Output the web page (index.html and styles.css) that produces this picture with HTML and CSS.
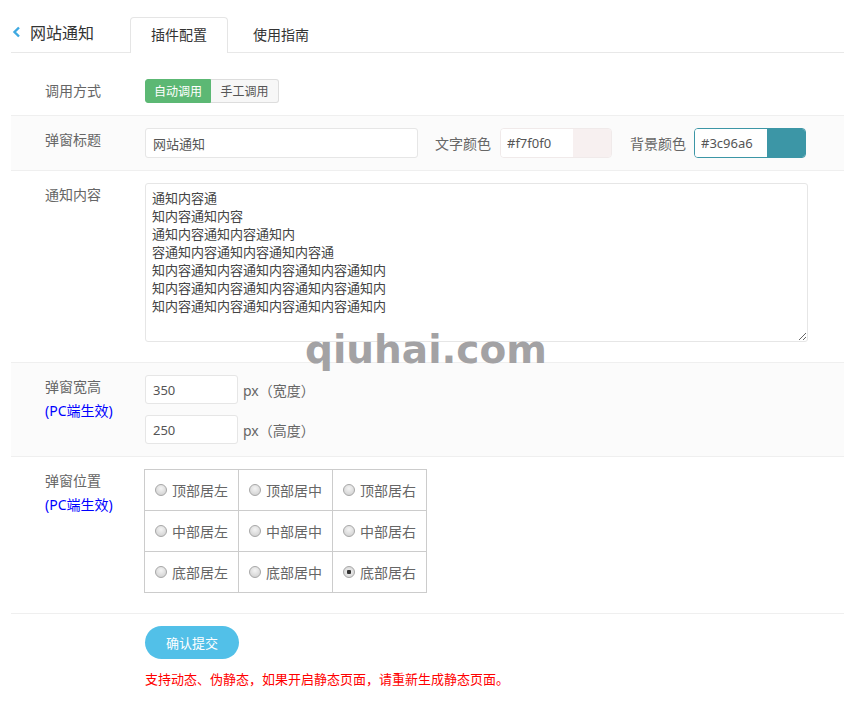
FILE: index.html
```html
<!DOCTYPE html>
<html lang="zh-CN">
<head>
    <meta charset="UTF-8">
    <meta name="viewport" content="width=device-width, initial-scale=1.0">
    <title>网站通知 - 插件配置</title>
    <link rel="stylesheet" href="styles.css">
</head>
<body>
    <div class="wrap">
        <div class="topbar">
            <a href="#" class="back">
                <svg width="9" height="12" viewBox="0 0 9 12"><path d="M7 1.5 L2.5 6 L7 10.5" fill="none" stroke="#3ea9e1" stroke-width="2.4"/></svg>
                网站通知
            </a>
            <ul class="tabs">
                <li class="tab active">插件配置</li>
                <li class="tab">使用指南</li>
            </ul>
        </div>

        <form class="form">
            <!-- 调用方式 -->
            <div class="row row-first">
                <div class="row-label">调用方式</div>
                <div class="row-body">
                    <div class="btn-group">
                        <button type="button" class="btn-mode on">自动调用</button>
                        <button type="button" class="btn-mode">手工调用</button>
                    </div>
                </div>
            </div>

            <!-- 弹窗标题 -->
            <div class="row row-gray">
                <div class="row-label">弹窗标题</div>
                <div class="row-body inline">
                    <input type="text" class="input input-title" value="网站通知">
                    <span class="sub-label first">文字颜色</span>
                    <div class="color-box light">
                        <input type="text" class="color-text" value="#f7f0f0">
                        <span class="swatch" style="background:#f7f0f0"></span>
                    </div>
                    <span class="sub-label">背景颜色</span>
                    <div class="color-box dark">
                        <input type="text" class="color-text" value="#3c96a6">
                        <span class="swatch" style="background:#3c96a6"></span>
                    </div>
                </div>
            </div>

            <!-- 通知内容 -->
            <div class="row">
                <div class="row-label">通知内容</div>
                <div class="row-body">
                    <textarea class="textarea">通知内容通
知内容通知内容
通知内容通知内容通知内
容通知内容通知内容通知内容通
知内容通知内容通知内容通知内容通知内
知内容通知内容通知内容通知内容通知内
知内容通知内容通知内容通知内容通知内</textarea>
                </div>
            </div>

            <!-- 弹窗宽高 -->
            <div class="row row-gray">
                <div class="row-label">弹窗宽高<br><span class="tip">(PC端生效)</span></div>
                <div class="row-body">
                    <div class="size-line">
                        <input type="text" class="input input-size" value="350">
                        <span class="unit">px（宽度）</span>
                    </div>
                    <div class="size-line">
                        <input type="text" class="input input-size" value="250">
                        <span class="unit">px（高度）</span>
                    </div>
                </div>
            </div>

            <!-- 弹窗位置 -->
            <div class="row">
                <div class="row-label">弹窗位置<br><span class="tip">(PC端生效)</span></div>
                <div class="row-body">
                    <table class="pos-table">
                        <tr>
                            <td><label><input type="radio" name="pos"> 顶部居左</label></td>
                            <td><label><input type="radio" name="pos"> 顶部居中</label></td>
                            <td><label><input type="radio" name="pos"> 顶部居右</label></td>
                        </tr>
                        <tr>
                            <td><label><input type="radio" name="pos"> 中部居左</label></td>
                            <td><label><input type="radio" name="pos"> 中部居中</label></td>
                            <td><label><input type="radio" name="pos"> 中部居右</label></td>
                        </tr>
                        <tr>
                            <td><label><input type="radio" name="pos"> 底部居左</label></td>
                            <td><label><input type="radio" name="pos"> 底部居中</label></td>
                            <td><label><input type="radio" name="pos" checked> 底部居右</label></td>
                        </tr>
                    </table>
                </div>
            </div>

            <div class="actions">
                <button type="button" class="btn-submit">确认提交</button>
                <p class="note">支持动态、伪静态，如果开启静态页面，请重新生成静态页面。</p>
            </div>
        </form>

        <div class="watermark">qiuhai.com</div>
    </div>
</body>
</html>
```

FILE: styles.css
```css
body {
    margin: 0;
    padding: 0;
    background-color: #fff;
    font-family: "Noto Sans", "Noto Sans CJK SC", sans-serif;
    font-size: 14px;
    color: #666;
}

.wrap {
    position: relative;
    margin-left: 11px;
}

/* 顶部标题和标签 */
.topbar {
    display: flex;
    align-items: flex-start;
    height: 35px;
    padding-top: 17px;
    border-bottom: 1px solid #e8e8e8;
}

.back {
    display: flex;
    align-items: center;
    margin-top: 3px;
    height: 24px;
    font-size: 16px;
    color: #333;
    text-decoration: none;
}

.back svg {
    margin-left: 1px;
    margin-right: 9px;
}

.tabs {
    display: flex;
    list-style: none;
    margin: 0 0 0 36px;
    padding: 0;
}

.tab {
    box-sizing: border-box;
    height: 36px;
    line-height: 33px;
    padding: 0 20px;
    margin-right: 4px;
    font-size: 14px;
    color: #333;
    border: 1px solid transparent;
    border-bottom: none;
    border-radius: 4px 4px 0 0;
    cursor: pointer;
}

.tab.active {
    background-color: #fff;
    border-color: #e5e5e5;
}

/* 表单行 */
.row {
    display: flex;
    padding: 12px 0;
    border-bottom: 1px solid #efefef;
}

.row-first {
    padding-top: 26px;
}

.row-gray {
    background-color: #fbfbfb;
}

.row-label {
    flex-shrink: 0;
    width: 100px;
    padding-left: 34px;
    line-height: 24px;
    font-size: 14px;
    color: #666;
}

.tip {
    color: #00f;
}

.row-body {
    flex: 1;
}

.row-body.inline {
    display: flex;
    align-items: center;
}

.btn-group {
    display: flex;
}

.btn-mode {
    height: 24px;
    padding: 0;
    font-family: inherit;
    font-size: 12px;
    color: #555;
    background-color: #f7f7f7;
    border: 1px solid #ddd;
    cursor: pointer;
}

.btn-mode:first-child {
    width: 66px;
    border-radius: 3px 0 0 3px;
}

.btn-mode:last-child {
    width: 68px;
    border-left: none;
    border-radius: 0 3px 3px 0;
}

.btn-mode.on {
    background-color: #5cb874;
    border-color: #5cb874;
    color: #fff;
}

.input {
    box-sizing: border-box;
    height: 30px;
    padding: 0 7px;
    font-family: inherit;
    font-size: 13px;
    color: #555;
    border: 1px solid #e6e6e6;
    border-radius: 3px;
    background-color: #fff;
    outline: none;
}

.input-title {
    width: 273px;
}

.sub-label {
    margin: 0 8px 0 18px;
    font-size: 14px;
    color: #666;
}

.sub-label.first {
    margin: 0 9px 0 17px;
}

.color-box {
    box-sizing: border-box;
    display: flex;
    width: 112px;
    height: 30px;
    border: 1px solid #f0eaea;
    border-radius: 4px;
    overflow: hidden;
}

.color-box.dark {
    border-color: #3c96a6;
}

.color-text {
    box-sizing: border-box;
    width: 72px;
    height: 100%;
    padding: 0 6px;
    border: none;
    outline: none;
    font-family: inherit;
    font-size: 13px;
    color: #555;
    background-color: #fff;
}

.swatch {
    flex: 1;
}

.textarea {
    display: block;
    box-sizing: border-box;
    width: 663px;
    height: 159px;
    margin-bottom: 8px;
    padding: 5px 6px;
    font-family: inherit;
    font-size: 13px;
    line-height: 18px;
    color: #444;
    border: 1px solid #e6e6e6;
    border-radius: 3px;
    outline: none;
}

.size-line {
    display: flex;
    align-items: center;
}

.size-line + .size-line {
    margin-top: 11px;
}

.input-size {
    width: 93px;
    height: 29px;
}

.unit {
    margin-left: 5px;
    font-size: 14px;
    color: #666;
}

/* 位置表格 */
.pos-table {
    border-collapse: collapse;
    margin: 0 0 8px -1px;
}

.pos-table td {
    box-sizing: border-box;
    width: 94px;
    height: 41px;
    padding: 0 0 0 10px;
    border: 1px solid #ccc;
    font-size: 14px;
    color: #666;
}

.pos-table label {
    display: flex;
    align-items: center;
    cursor: pointer;
}

.pos-table input[type="radio"] {
    appearance: none;
    -webkit-appearance: none;
    box-sizing: border-box;
    width: 12px;
    height: 12px;
    margin: 0 5px 0 0;
    border: 1px solid #a8a8a8;
    border-radius: 50%;
    background: radial-gradient(circle at 50% 35%, #f4f4f4 0%, #d8d8d8 70%, #c8c8c8 100%);
}

.pos-table input[type="radio"]:checked {
    background: radial-gradient(circle, #333 0, #333 2px, #e6e6e6 2.5px, #d0d0d0 100%);
}

/* 提交 */
.actions {
    padding: 12px 0 0 134px;
}

.btn-submit {
    width: 94px;
    height: 33px;
    padding: 0;
    font-family: inherit;
    font-size: 13px;
    color: #fff;
    background-color: #52c0e8;
    border: none;
    border-radius: 17px;
    cursor: pointer;
}

.note {
    margin: 10px 0 0;
    line-height: 20px;
    font-size: 13px;
    color: #f00;
}

.watermark {
    position: absolute;
    left: 294px;
    top: 331px;
    font-family: "DejaVu Sans", sans-serif;
    font-weight: bold;
    font-size: 39px;
    line-height: 38px;
    color: #a3a2a4;
    pointer-events: none;
}
```
